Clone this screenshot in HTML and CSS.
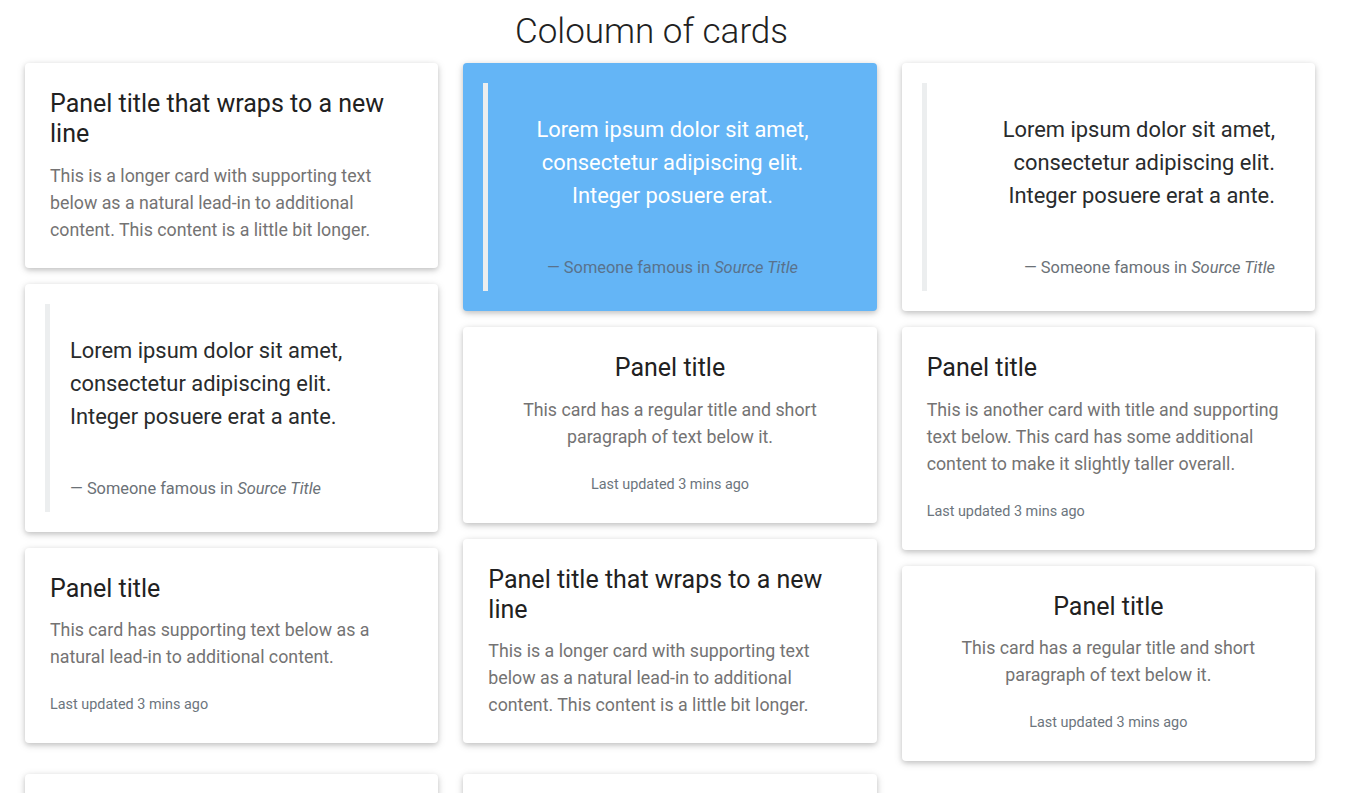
FILE: index.html
```html
<!DOCTYPE html>
<html lang="en">
<head>
<meta charset="utf-8">
<title>Coloumn of cards</title>
<link rel="stylesheet" href="styles.css">
</head>
<body>
<h1 class="heading">Coloumn of cards</h1>
<div class="columns">
  <div class="col">
    <div class="card">
      <div class="card-body">
        <h4 class="card-title">Panel title that wraps to a new line</h4>
        <p class="card-text">This is a longer card with supporting text below as a natural lead-in to additional content. This content is a little bit longer.</p>
      </div>
    </div>
    <div class="card card-quote">
      <blockquote class="quote">
        <p>Lorem ipsum dolor sit amet, consectetur adipiscing elit. Integer posuere erat a ante.</p>
        <footer class="quote-footer">Someone famous in <cite title="Source Title">Source Title</cite></footer>
      </blockquote>
    </div>
    <div class="card">
      <div class="card-body">
        <h4 class="card-title">Panel title</h4>
        <p class="card-text">This card has supporting text below as a natural lead-in to additional content.</p>
        <p class="card-meta">Last updated 3 mins ago</p>
      </div>
    </div>
    <div class="card card-next"></div>
  </div>
  <div class="col">
    <div class="card card-quote card-blue">
      <blockquote class="quote quote-center">
        <p>Lorem ipsum dolor sit amet, consectetur adipiscing elit. Integer posuere erat.</p>
        <footer class="quote-footer">Someone famous in <cite title="Source Title">Source Title</cite></footer>
      </blockquote>
    </div>
    <div class="card">
      <div class="card-body center">
        <h4 class="card-title">Panel title</h4>
        <p class="card-text">This card has a regular title and short paragraph of text below it.</p>
        <p class="card-meta">Last updated 3 mins ago</p>
      </div>
    </div>
    <div class="card">
      <div class="card-body">
        <h4 class="card-title">Panel title that wraps to a new line</h4>
        <p class="card-text">This is a longer card with supporting text below as a natural lead-in to additional content. This content is a little bit longer.</p>
      </div>
    </div>
    <div class="card card-next"></div>
  </div>
  <div class="col">
    <div class="card card-quote">
      <blockquote class="quote quote-right">
        <p>Lorem ipsum dolor sit amet, consectetur adipiscing elit. Integer posuere erat a ante.</p>
        <footer class="quote-footer">Someone famous in <cite title="Source Title">Source Title</cite></footer>
      </blockquote>
    </div>
    <div class="card">
      <div class="card-body">
        <h4 class="card-title">Panel title</h4>
        <p class="card-text">This is another card with title and supporting text below. This card has some additional content to make it slightly taller overall.</p>
        <p class="card-meta">Last updated 3 mins ago</p>
      </div>
    </div>
    <div class="card">
      <div class="card-body center">
        <h4 class="card-title">Panel title</h4>
        <p class="card-text">This card has a regular title and short paragraph of text below it.</p>
        <p class="card-meta">Last updated 3 mins ago</p>
      </div>
    </div>
  </div>
</div>
</body>
</html>
```

FILE: styles.css
```css
html, body {
  margin: 0;
  padding: 0;
  background: #ffffff;
}

body {
  font-family: Roboto, "Liberation Sans", Arial, sans-serif;
  color: #292b2c;
}

.heading {
  width: 1303px;
  margin: 0 0 9px 0;
  padding-top: 10px;
  font-size: 35px;
  line-height: 44px;
  font-weight: 300;
  text-align: center;
  color: #212121;
}

.columns {
  display: flex;
  gap: 25px;
  width: 1290px;
  margin-left: 25px;
  align-items: flex-start;
}

.col {
  flex: 1 1 0;
  min-width: 0;
  display: flex;
  flex-direction: column;
}

.card {
  background: #ffffff;
  border-radius: 4px;
  box-shadow: 0 2px 5px 0 rgba(0, 0, 0, 0.16), 0 2px 10px 0 rgba(0, 0, 0, 0.12);
  margin-bottom: 16px;
}

.card-body {
  padding: 25px;
}

.center {
  text-align: center;
}

.card-title {
  margin: 0 0 12.5px 0;
  padding-top: 1px;
  font-size: 25px;
  line-height: 30px;
  font-weight: 400;
  color: #212121;
}

.card-text {
  margin: 0;
  font-size: 17.8px;
  line-height: 27px;
  color: #747373;
}

.card-meta {
  margin: 22px 0 0 0;
  font-size: 14.4px;
  line-height: 26px;
  color: #6c757d;
}

.card-quote {
  padding: 20px;
}

.quote {
  margin: 0;
  padding: 30px 20px 11px 20px;
  border-left: 5px solid #eceeef;
}

.quote p {
  margin: 0 0 44px 0;
  font-size: 21.9px;
  line-height: 33px;
  color: #292b2c;
}

.quote-footer {
  font-size: 16.4px;
  line-height: 24px;
  color: #6b7177;
}

.quote-footer::before {
  content: "\2014\00A0";
}

.quote-center {
  text-align: center;
}

.quote-right {
  text-align: right;
}

.card-blue {
  background: #64b5f6;
}

.card-blue .quote {
  border-left-color: #eceeef;
}

.card-blue .quote p {
  color: #ffffff;
}

.card-blue .quote-footer {
  color: #59728c;
}

.card-next {
  margin-top: 15px;
  height: 120px;
}
```
